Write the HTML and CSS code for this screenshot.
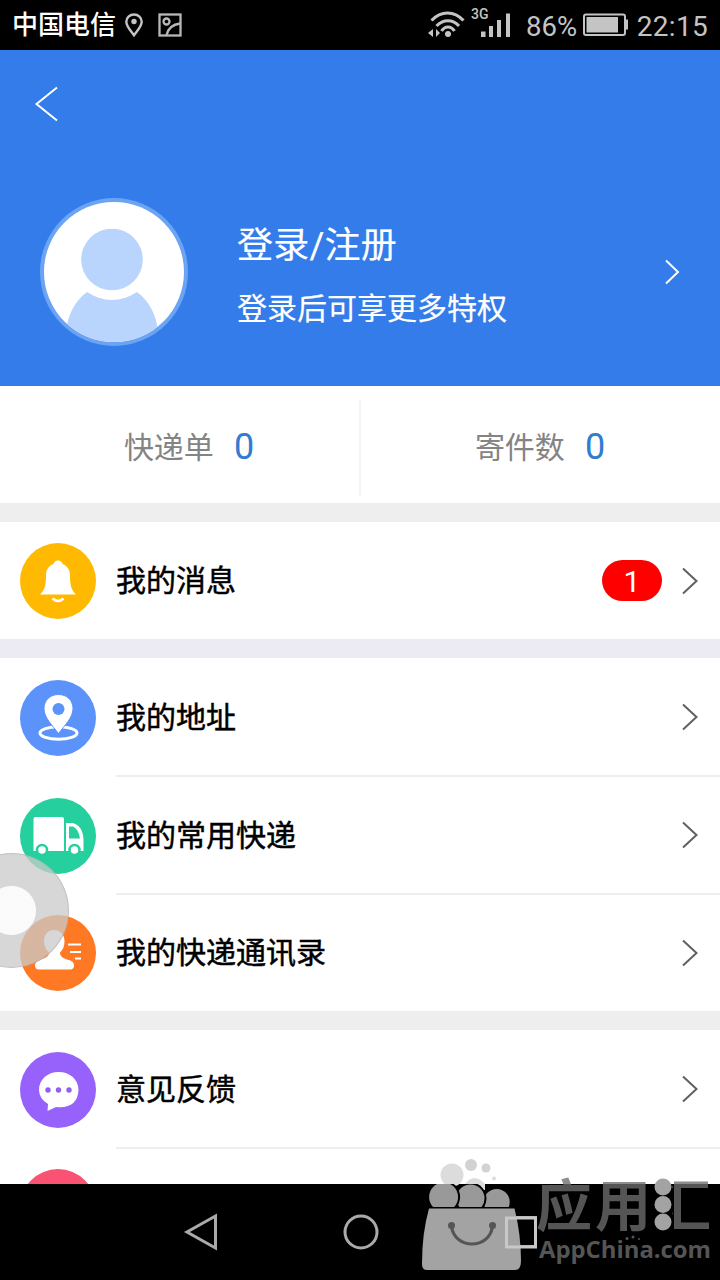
FILE: index.html
```html
<!DOCTYPE html>
<html lang="zh-CN">
<head>
<meta charset="utf-8">
<title>我的</title>
<link rel="stylesheet" href="styles.css">
</head>
<body>
<div class="screen">
  <header class="status">
    <span class="carrier">中国电信</span>
    <svg class="pin" width="20" height="26" viewBox="0 0 20 26"><path d="M10 2.500C5.600 2.500 2.300 5.700 2.300 9.800 2.300 14.500 7 19 10 23.200 13 19 17.700 14.500 17.700 9.800 17.700 5.700 14.400 2.500 10 2.500Z" fill="none" stroke="#c4c4c4" stroke-width="2.400"/><circle cx="10" cy="9.500" r="2.700" fill="#c4c4c4"/></svg>
    <svg class="photo" width="24" height="24" viewBox="0 0 24 24" fill="none" stroke="#b8b8b8" stroke-width="2.300"><rect x="1.500" y="1.500" width="21" height="21"/><circle cx="8.500" cy="8.500" r="3"/><path d="M8.500 22C10 16 14 11.500 22 10.500"/></svg>
    <svg class="signals" width="88" height="36" viewBox="0 0 88 36"><g fill="none" stroke="#c4c4c4" stroke-width="3"><path d="M3.500 15.500C13 5.500 26 5.500 35.500 15.500"/><path d="M8.500 21C15 14 25 14 31 21"/><path d="M13.500 26C17 20.500 23 20.500 26.500 26"/></g><circle cx="20" cy="29" r="3" fill="#c4c4c4"/><path d="M5 24V32L0 28ZM8 24V32L12 28Z" fill="#c4c4c4"/><text x="43" y="14" class="network">3G</text><path d="M53 26.500h4.500v5.500H53zM61 21h4v11h-4zM69 15h4v17h-4zM78 8.500h4v23.500h-4z" fill="#c4c4c4"/></svg>
    <span class="percent">86%</span>
    <svg class="battery" width="46" height="24" viewBox="0 0 46 24"><rect x="1" y="1.500" width="41" height="20.500" rx="2" fill="none" stroke="#c4c4c4" stroke-width="2"/><path d="M3.500 4H35V19.500H3.500ZM42 6.500h3v10h-3z" fill="#c4c4c4"/></svg>
    <time class="clock">22:15</time>
  </header>

  <main class="page">
    <section class="hero">
      <svg class="back" width="26" height="38" viewBox="0 0 26 38"><path d="M23 2.500 2.500 19 23 35.500" fill="none" stroke="#fff" stroke-width="2"/></svg>
      <div class="account">
        <svg class="avatar" width="148" height="148" viewBox="0 0 148 148"><defs><clipPath id="face"><circle cx="74" cy="74" r="70"/></clipPath></defs><circle cx="74" cy="74" r="74" fill="#6ba4f3"/><circle cx="74" cy="74" r="70" fill="#fff"/><g clip-path="url(#face)"><path d="M26 133C28 116 35 103 47 94Q72 110 97 94C109 103 116 116 118 133V148H26Z" fill="#b9d5fd"/></g><circle cx="72" cy="61.500" r="36" fill="#fff"/><circle cx="72" cy="61.500" r="30.800" fill="#b9d5fd"/></svg>
        <div class="login">
          <div class="login-title">登录/注册</div>
          <div class="login-note">登录后可享更多特权</div>
        </div>
        <svg class="go" width="16" height="28" viewBox="0 0 16 28"><path d="M2 2.500 14 14 2 25.500" fill="none" stroke="#fff" stroke-width="2"/></svg>
      </div>
    </section>

    <section class="stats">
      <div class="stat"><span>快递单</span><b>0</b></div>
      <div class="stat"><span>寄件数</span><b>0</b></div>
    </section>

    <section class="group first">
      <div class="row">
        <svg class="icon" viewBox="0 0 76 76"><circle cx="38" cy="38" r="38" fill="#ffb900"/><path d="M38 17.500c2.500 0 4 1.500 4.500 3.500 5 2 7.500 6 7.500 11 0 10 1 14.500 6 19.500H20c5-5 6-9.500 6-19.500 0-5 2.500-9 7.500-11 .5-2 2-3.500 4.500-3.500Z" fill="#fff"/><path d="M32.500 55.500q5.500 5 11 0" fill="none" stroke="#fff" stroke-width="2.500"/></svg>
        <div class="cell"><span class="label">我的消息</span><span class="badge">1</span><svg class="chevron" viewBox="0 0 18 30"><path d="M2 2.500 15.500 15 2 27.500"/></svg></div>
      </div>
    </section>

    <section class="group second">
      <div class="row">
        <svg class="icon" viewBox="0 0 76 76"><circle cx="38" cy="38" r="38" fill="#5b93fa"/><ellipse cx="38.500" cy="53" rx="18.500" ry="6.200" fill="none" stroke="#fff" stroke-width="3"/><path d="M38.500 14.500c-8.500 0-14.500 6-14.500 14C24 38 33 46 38.500 53.500 44 46 53 38 53 28.500c0-8-6-14-14.500-14Z" fill="#fff" stroke="#5b93fa" stroke-width="1"/><circle cx="38.500" cy="29" r="6" fill="#5b93fa"/></svg>
        <div class="cell"><span class="label">我的地址</span><svg class="chevron" viewBox="0 0 18 30"><path d="M2 2.500 15.500 15 2 27.500"/></svg></div>
      </div>
      <div class="row">
        <svg class="icon" viewBox="0 0 76 76"><circle cx="38" cy="38" r="38" fill="#25cf9e"/><path d="M15.500 19H42q2 0 2 2V53H13.500V21q0-2 2-2ZM46 25h7q10 3 10.500 17v11H46Z" fill="#fff"/><path d="M49 28.500h4Q58.500 31 60 40.500H49Z" fill="#25cf9e"/><g fill="#fff" stroke="#25cf9e" stroke-width="2.500"><circle cx="22" cy="52" r="5"/><circle cx="54.500" cy="52" r="5"/></g></svg>
        <div class="cell"><span class="label">我的常用快递</span><svg class="chevron" viewBox="0 0 18 30"><path d="M2 2.500 15.500 15 2 27.500"/></svg></div>
      </div>
      <div class="row last">
        <svg class="icon" viewBox="0 0 76 76"><circle cx="38" cy="38" r="38" fill="#ff7824"/><path d="M34 15c-6 0-10 4.500-10 11 0 5 2 9 5 11.500 0 4-3 5-8 7C17 46 15 48 15 50q0 4.500 4 4.500H50q4 0 4-4c0-4-3-5-7-6-4-1.500-7-3-7-7 3-2.500 4.500-6.500 4.500-11.500 0-6.500-4.500-11-10.500-11Z" fill="#fff"/><path d="M48 29.500h13M50 37h11M55 43.500h6" stroke="#fff" stroke-width="2.200"/></svg>
        <div class="cell"><span class="label">我的快递通讯录</span><svg class="chevron" viewBox="0 0 18 30"><path d="M2 2.500 15.500 15 2 27.500"/></svg></div>
      </div>
    </section>

    <section class="group third">
      <div class="row">
        <svg class="icon" viewBox="0 0 76 76"><circle cx="38" cy="38" r="38" fill="#9662fb"/><path d="M38.500 20C27.500 20 19 27.500 19 38q0 8.500 9 14l-.5 7 8.500-4Q57.500 57 58.500 38C58.500 27.500 50 20 38.500 20Z" fill="#fff"/><g fill="#8e5ff0"><circle cx="28" cy="38" r="2.700"/><circle cx="38.500" cy="38" r="2.700"/><circle cx="49" cy="38" r="2.700"/></g></svg>
        <div class="cell"><span class="label">意见反馈</span><svg class="chevron" viewBox="0 0 18 30"><path d="M2 2.500 15.500 15 2 27.500"/></svg></div>
      </div>
      <div class="row last">
        <svg class="icon" viewBox="0 0 76 76"><circle cx="38" cy="38" r="38" fill="#f95272"/></svg>
      </div>
    </section>
  </main>

  <nav class="navbar">
    <svg width="36" height="40" viewBox="0 0 36 40"><path d="M33.500 4V36L5 20Z"/></svg>
    <svg width="36" height="36" viewBox="0 0 36 36"><circle cx="18" cy="18" r="16"/></svg>
    <svg width="34" height="34" viewBox="0 0 34 34"><rect x="2.500" y="2.500" width="29" height="29"/></svg>
  </nav>

  <div class="assist"></div>

  <svg class="watermark" width="320" height="124" viewBox="0 0 320 124">
    <defs>
      <linearGradient id="box" gradientUnits="userSpaceOnUse" x1="260" y1="0" x2="320" y2="0"><stop offset=".2" stop-color="#6e6e6e" stop-opacity="0"/><stop offset=".2" stop-color="#6e6e6e"/></linearGradient>
      <clipPath id="above"><rect x="20" y="28" width="100" height="23"/></clipPath>
    </defs>
    <g fill="#dcdcdc"><circle cx="52" cy="19" r="11.500"/><path d="M65 28q9-12 20 0v6H75z"/><circle cx="71" cy="9" r="6" fill="#d2d2d2"/><circle cx="86" cy="12" r="4.500" fill="#d2d2d2"/><circle cx="94" cy="22.500" r="2"/></g>
    <g fill="#999" clip-path="url(#above)"><circle cx="96.700" cy="46" r="13"/><circle cx="70.500" cy="42.500" r="16" fill="#000"/><circle cx="70.500" cy="42.500" r="14"/><circle cx="43.600" cy="41" r="16.500" fill="#000"/><circle cx="43.600" cy="41" r="14.500"/></g>
    <path d="M29 52.500H114.500Q121 78 121 105 121 114 115 114H27Q22 114 22 108 22 77 29 52.500Z" fill="#a3a3a3"/>
    <path d="M51.500 70C54 94 90 94 92.500 70" fill="none" stroke="#555" stroke-width="3"/><circle cx="51.500" cy="69.500" r="3.500" fill="#555"/><circle cx="92.500" cy="69.500" r="3.500" fill="#555"/>
    <rect x="106.500" y="62" width="29" height="29" fill="none" stroke="#c8c8c8" stroke-width="3"/>
    <g opacity=".78"><text class="brand" x="136" y="70">应</text><text class="brand" x="195" y="70">用</text><text class="brand half" x="255" y="70">汇</text></g>
    <g fill="#a3a3a3"><circle cx="263" cy="31" r="8.500"/><circle cx="263" cy="48.500" r="8.500"/><circle cx="263" cy="66" r="8.500"/></g>
    <text class="domain" x="139" y="102" textLength="172" lengthAdjust="spacingAndGlyphs">AppChina.com</text>
    <g fill="#555"><circle cx="227" cy="82.500" r="1.500"/><circle cx="233" cy="81" r="1.500"/><circle cx="239" cy="83" r="1"/></g>
  </svg>
</div>
</body>
</html>
```
FILE: styles.css
```css
* { box-sizing: border-box; }
body { margin: 0; font-family: Roboto, "Noto Sans CJK SC", sans-serif; }
svg { display: block; flex: none; }
.screen { position: relative; width: 720px; height: 1280px; overflow: hidden; display: flex; flex-direction: column; background: #fff; }

.status { height: 50px; flex: none; display: flex; align-items: center; padding: 0 12px; background: #000; color: #c4c4c4; line-height: 50px; white-space: nowrap; }
.carrier { width: 104px; color: #fff; font-size: 26px; font-weight: 500; }
.pin { margin-left: 8px; }
.photo { margin-left: 14px; }
.signals { width: 88px; margin: -4px 0 0 246px; }
.network { font: 500 14px Roboto, sans-serif; fill: #c4c4c4; }
.percent { width: 54px; margin-left: 10px; padding-top: 3px; font-size: 27.500px; }
.battery { margin-left: 3px; }
.clock { margin-left: 8px; padding-top: 3px; font-size: 28px; letter-spacing: .3px; }

.page { flex: 1; min-height: 0; overflow: hidden; background: #eee; }
.hero { height: 336px; background: #337ce9; color: #fff; padding: 35px 40px 0 34px; }
.account { display: flex; align-items: center; margin: 75px 0 0 6px; }
.login { flex: 1; margin-left: 49px; padding-top: 6px; }
.login-title { font-size: 36px; line-height: 54px; letter-spacing: .2px; -webkit-text-stroke: .2px #fff; }
.login-note { font-size: 30px; line-height: 44px; margin-top: 14px; -webkit-text-stroke: .2px #fff; }

.stats { display: flex; height: 117px; background: #fff; }
.stat { flex: 0 0 360px; display: flex; align-items: center; justify-content: center; gap: 20px; padding: 2px 0 0 18px; color: #848484; font-size: 30px; }
.stat span { position: relative; top: -1px; }
.stat b { position: relative; top: 1px; color: #337bd0; font-weight: 400; font-size: 36px; }
.stat + .stat { position: relative; padding-left: 0; }
.stat + .stat::before { content: ""; position: absolute; left: -1px; top: 14px; width: 2px; height: 96px; background: #f4f4f4; }

.group { background: #fff; }
.first { margin-top: 19px; }
.second { border-top: 19px solid #ecebf3; }
.third { margin-top: 19px; }
.row { display: flex; height: 118px; padding-left: 20px; }
.first .row, .row.last { height: 117px; }
.icon { width: 76px; height: 76px; margin: 22px 20px 0 0; }
.first .icon, .row.last .icon { margin-top: 21px; }
.cell { flex: 1; display: flex; align-items: center; margin-bottom: -1px; padding: 1px 21px 0 0; border-bottom: 2px solid #eee; font-size: 30px; color: #000; }
.first .cell, .last .cell { border-bottom-color: transparent; }
.label { flex: 1; line-height: 44px; padding-top: 1px; -webkit-text-stroke: .5px #000; }
.badge { width: 60px; height: 41px; margin-right: 19px; border-radius: 21px; background: #f00; color: #fff; text-align: center; line-height: 43px; }
.chevron { width: 18px; height: 30px; fill: none; stroke: #606060; stroke-width: 2; }

.navbar { height: 96px; flex: none; background: #000; display: flex; align-items: center; justify-content: space-between; padding: 0 182px; }
.navbar svg { fill: none; stroke: #aaa; stroke-width: 3; }

.assist { position: absolute; left: -46px; top: 853px; width: 115px; height: 115px; border-radius: 50%; background: radial-gradient(circle, rgba(250,250,250,.93) 24px, rgba(202,202,202,.76) 25px); border: 1px solid rgba(160,160,160,.4); }
.watermark { position: absolute; left: 400px; top: 1156px; }
.brand { font: 700 56px "Noto Sans CJK SC", sans-serif; fill: #6e6e6e; }
.brand.half { fill: url(#box); }
.domain { font: 700 24px "Open Sans", sans-serif; fill: #555; }
```
